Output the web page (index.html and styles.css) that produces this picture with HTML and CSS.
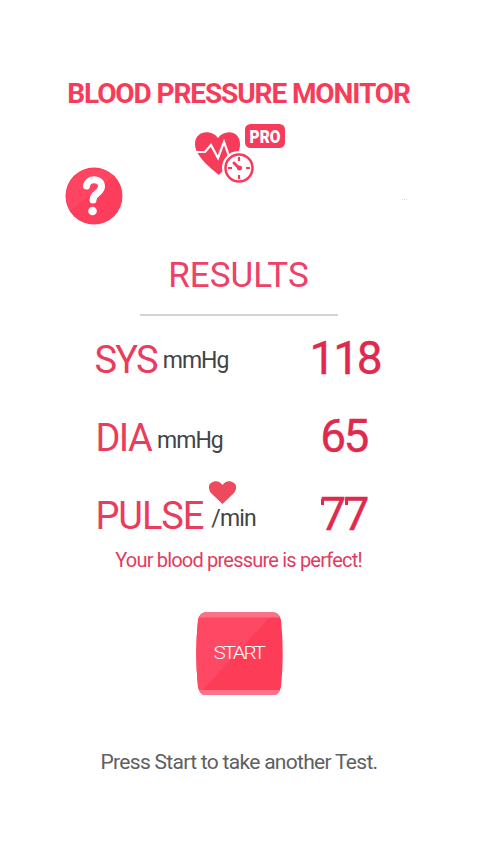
FILE: index.html
```
<!doctype html>
<html lang="en">

<head>
  <meta charset="utf-8">
  <meta name="viewport" content="width=device-width, initial-scale=1">
  <title>Blood Pressure Monitor</title>
  <link rel="stylesheet" href="styles.css">
</head>

<body>
  <div class="header">
    <h1>BLOOD PRESSURE MONITOR</h1>
    <svg class="logo" width="92" height="62" viewBox="0 0 92 62">
      <path d="M25 52C14 43 1 32 1 21C1 7 18 6 24 15C30 6 46 7 46 21C46 34 34 43 25 52Z" fill="#f63c5a" />
      <path d="M0 29H11L17 22L24 35L30 19L35 33L39 30" fill="none" stroke="#fff" stroke-width="2.2" />
      <circle cx="45" cy="45" r="17" fill="#fff" />
      <circle cx="45" cy="45" r="13.500" fill="#fff" stroke="#f63c5a" stroke-width="2.500" />
      <path d="M45 34v4M45 52v4M34 45h4M52 45h4" stroke="#f63c5a" stroke-width="2.200" />
      <path d="M40 40L45 45" stroke="#f63c5a" stroke-width="3" stroke-linecap="round" />
      <circle cx="45.500" cy="45" r="2.500" fill="#f63c5a" />
      <rect x="51" y="1" width="40" height="24" rx="5.500" fill="#f63c5a" />
      <text class="pro" x="55.500" y="20" textLength="31" lengthAdjust="spacingAndGlyphs">PRO</text>
    </svg>
  </div>

  <div class="help">
    <svg width="58" height="58" viewBox="0 0 58 58">
      <circle cx="29" cy="29" r="28.500" fill="#fc3d5b" />
      <path d="M5 44A28.500 28.500 0 0 1 49 9Z" fill="#ff4561" />
      <path d="M21.500 19C22.500 10.500 36.500 10.500 36.500 19.500C36.500 26 28 26 28 33" fill="none" stroke="#fff" stroke-width="7" stroke-linecap="round" />
      <circle cx="27.500" cy="44" r="4.300" fill="#fff" />
    </svg>
    <span class="dots"></span>
  </div>

  <h2>RESULTS</h2>

  <div class="results">
    <div class="row">
      <span class="name sys">SYS</span>
      <span class="unit">mmHg</span>
      <span class="value wide">118</span>
    </div>
    <div class="row">
      <span class="name dia">DIA</span>
      <span class="unit low">mmHg</span>
      <span class="value">65</span>
    </div>
    <div class="row">
      <span class="name pulse">PULSE</span>
      <span class="unit low min">/min
        <svg class="heart" width="27" height="23" viewBox="0 0 27 23">
          <path d="M13.500 23L3 13C-1 9 -1 4 2 2C6 -1 11 0 13.500 4C16 0 21 -1 25 2C28 4 28 9 24 13Z" fill="#ee4a5e" />
        </svg>
      </span>
      <span class="value sevens">77</span>
    </div>
  </div>

  <p class="message">Your blood pressure is perfect!</p>

  <button class="start">
    <svg width="87" height="84" viewBox="0 0 87 84">
      <path d="M9 0.500H78Q83 0.500 85 8Q88.500 42 85 75Q83 83 78 83H9Q4 83 2 75Q-1.500 42 2 8Q4 0.500 9 0.500Z" fill="#fd3c58" />
      <path d="M2 8Q4 0.500 9 0.500H78L5 80Q3 79 2 75Q-1.500 42 2 8Z" fill="#ff4864" />
      <path d="M3 5.500Q5 0.500 9 0.500H78Q82 0.500 84 5.500ZM3 78H84Q82 83 78 83H9Q5 83 3 78Z" fill="#ff7187" />
      <text class="start-text" x="17.500" y="47" textLength="50" lengthAdjust="spacingAndGlyphs">START</text>
    </svg>
  </button>

  <p class="hint">Press Start to take another Test.</p>
</body>

</html>
```
FILE: styles.css
```
body {
  margin: 0;
  padding-top: 77px;
  display: flex;
  flex-direction: column;
  align-items: center;
  background: #fff;
  font-family: Roboto, "Liberation Sans", sans-serif;
}

h1,
h2,
p {
  margin: 0;
  font-weight: 400;
  white-space: nowrap;
}

.header {
  display: flex;
  flex-direction: column;
  align-items: center;
}

.header h1 {
  margin-right: 2px;
  font-size: 28px;
  line-height: 34px;
  font-weight: 700;
  letter-spacing: -1.1px;
  color: #f63c5a;
}

.logo {
  margin: 12px 0 0 2px;
}

.pro {
  font-size: 19px;
  font-weight: 900;
  fill: #fff;
}

/* help button row, with the faint mark on the right */
.help {
  width: 350px;
  height: 58px;
  margin-top: -18px;
  display: flex;
  justify-content: space-between;
  align-items: center;
}

.dots {
  width: 5px;
  margin: 6px 8px 0 0;
  border-top: 1px dotted #ddd;
}

h2 {
  width: 198px;
  height: 60px;
  margin: 29px 2px 0 0;
  text-align: center;
  font-size: 35px;
  line-height: 43px;
  color: #ee4168;
  border-bottom: 2px solid #d4d4d4;
}

.results {
  width: 290px;
  margin-top: 3px;
}

.row {
  display: flex;
  align-items: baseline;
  height: 78px;
  line-height: 76px;
}

.name {
  font-size: 38px;
  color: #ea3d5d;
}

.sys {
  letter-spacing: -1.8px;
}

.dia {
  margin-left: 1px;
  letter-spacing: -1.6px;
}

.pulse {
  margin-left: 1px;
  letter-spacing: -1.1px;
}

.unit {
  margin-left: 6px;
  font-size: 23px;
  letter-spacing: -1px;
  position: relative;
  top: -5px;
  color: #444;
}

.low {
  top: -3px;
}

.min {
  margin-left: 8px;
  letter-spacing: -0.8px;
}

/* the heart floats over the unit */
.heart {
  position: absolute;
  left: -2px;
  top: 0;
}

.value {
  width: 68px;
  margin: 0 7px 0 auto;
  text-align: center;
  font-size: 46px;
  letter-spacing: -2.5px;
  -webkit-text-stroke: 0.4px;
  position: relative;
  top: 1px;
  color: #de2a4d;
}

.wide {
  letter-spacing: -2.2px;
}

/* short downstrokes at the left of each seven */
.sevens::before,
.sevens::after {
  content: "";
  position: absolute;
  left: 11px;
  top: 23px;
  width: 3px;
  height: 6px;
  background: #de2a4d;
}

.sevens::after {
  left: 35px;
}

.message {
  margin: -5px 2px 0 0;
  font-size: 20px;
  line-height: 24px;
  letter-spacing: -0.8px;
  color: #df3c62;
}

.start {
  margin-top: 40px;
  padding: 0;
  border: none;
  background: none;
  height: 84px;
  cursor: pointer;
}

.start-text {
  font-family: Roboto, "Liberation Sans", sans-serif;
  font-size: 18px;
  font-weight: 300;
  letter-spacing: -2px;
  fill: #fff;
}

.hint {
  margin: 54px 1px 0 0;
  font-size: 21px;
  line-height: 24px;
  letter-spacing: -0.7px;
  color: #606060;
}
```
